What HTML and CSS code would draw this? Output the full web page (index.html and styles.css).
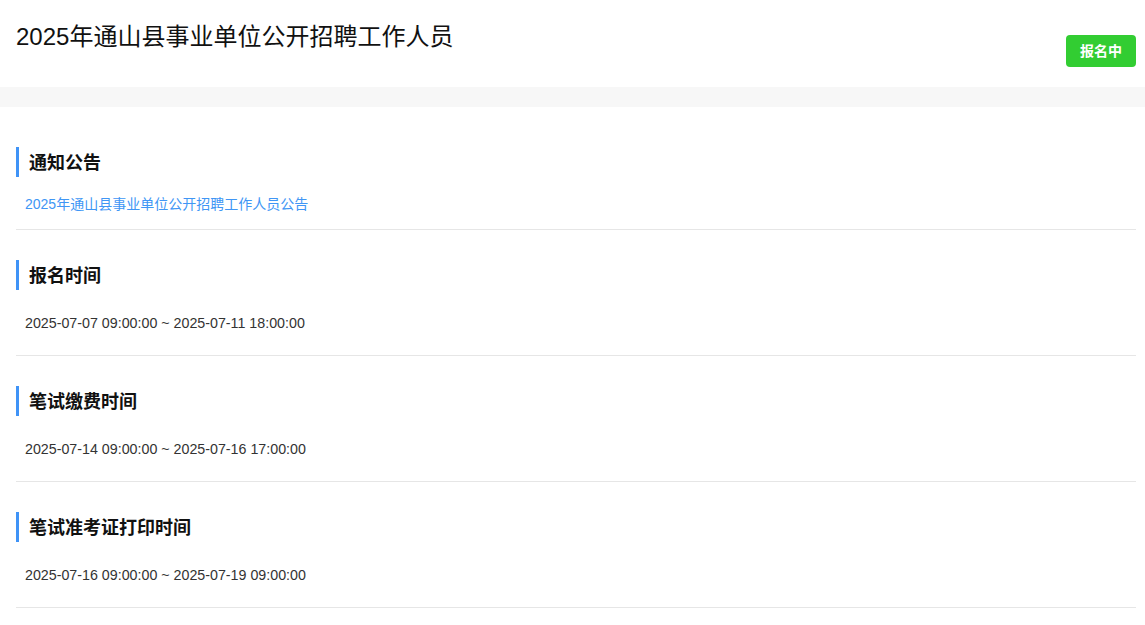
FILE: index.html
```html
<!DOCTYPE html>
<html lang="zh-CN">
<head>
  <meta charset="UTF-8" />
  <meta name="viewport" content="width=device-width, initial-scale=1" />
  <title>2025年通山县事业单位公开招聘工作人员</title>
  <link rel="stylesheet" href="styles.css">
</head>
<body>
  <header>
    <h1>2025年通山县事业单位公开招聘工作人员</h1>
    <span class="badge">报名中</span>
  </header>

  <div class="band"></div>

  <main>
    <section class="block first">
      <h2>通知公告</h2>
      <a class="notice" href="#">2025年通山县事业单位公开招聘工作人员公告</a>
    </section>

    <section class="block">
      <h2>报名时间</h2>
      <p>2025-07-07 09:00:00 ~ 2025-07-11 18:00:00</p>
    </section>

    <section class="block">
      <h2>笔试缴费时间</h2>
      <p>2025-07-14 09:00:00 ~ 2025-07-16 17:00:00</p>
    </section>

    <section class="block">
      <h2>笔试准考证打印时间</h2>
      <p>2025-07-16 09:00:00 ~ 2025-07-19 09:00:00</p>
    </section>
  </main>
</body>
</html>
```

FILE: styles.css
```css
body {
  margin: 0;
  font-family: "Liberation Sans", "Noto Sans CJK SC", sans-serif;
  background: #fff;
  color: #222;
}

header {
  height: 87px;
  box-sizing: border-box;
  padding: 19px 9px 0 16px;
  display: flex;
  justify-content: space-between;
  align-items: flex-start;
}

h1 {
  margin: 0;
  font-size: 24px;
  line-height: 36px;
  font-weight: normal;
  color: #111;
}

.badge {
  margin-top: 16px;
  width: 70px;
  height: 32px;
  line-height: 32px;
  text-align: center;
  background: #32cd32;
  color: #fff;
  font-size: 14px;
  font-weight: bold;
  border-radius: 4px;
}

.band {
  height: 20px;
  background: #f7f7f7;
}

main {
  padding: 0 9px 0 16px;
}

.block {
  padding: 30px 0 22px;
  border-bottom: 1px solid #e6e6e6;
}

.block.first {
  padding-top: 40px;
  padding-bottom: 15px;
}

h2 {
  margin: 0;
  height: 29px;
  padding: 1px 0 0 10px;
  line-height: 31px;
  border-left: 3px solid #3f93f7;
  font-size: 18px;
  color: #111;
}

.notice {
  display: block;
  margin-top: 17px;
  padding-left: 9px;
  font-size: 14px;
  line-height: 20px;
  color: #4096f5;
  text-decoration: none;
}

.block p {
  margin: 23px 0 0;
  padding-left: 9px;
  font-size: 14.25px;
  line-height: 20px;
  color: #333;
}
```
